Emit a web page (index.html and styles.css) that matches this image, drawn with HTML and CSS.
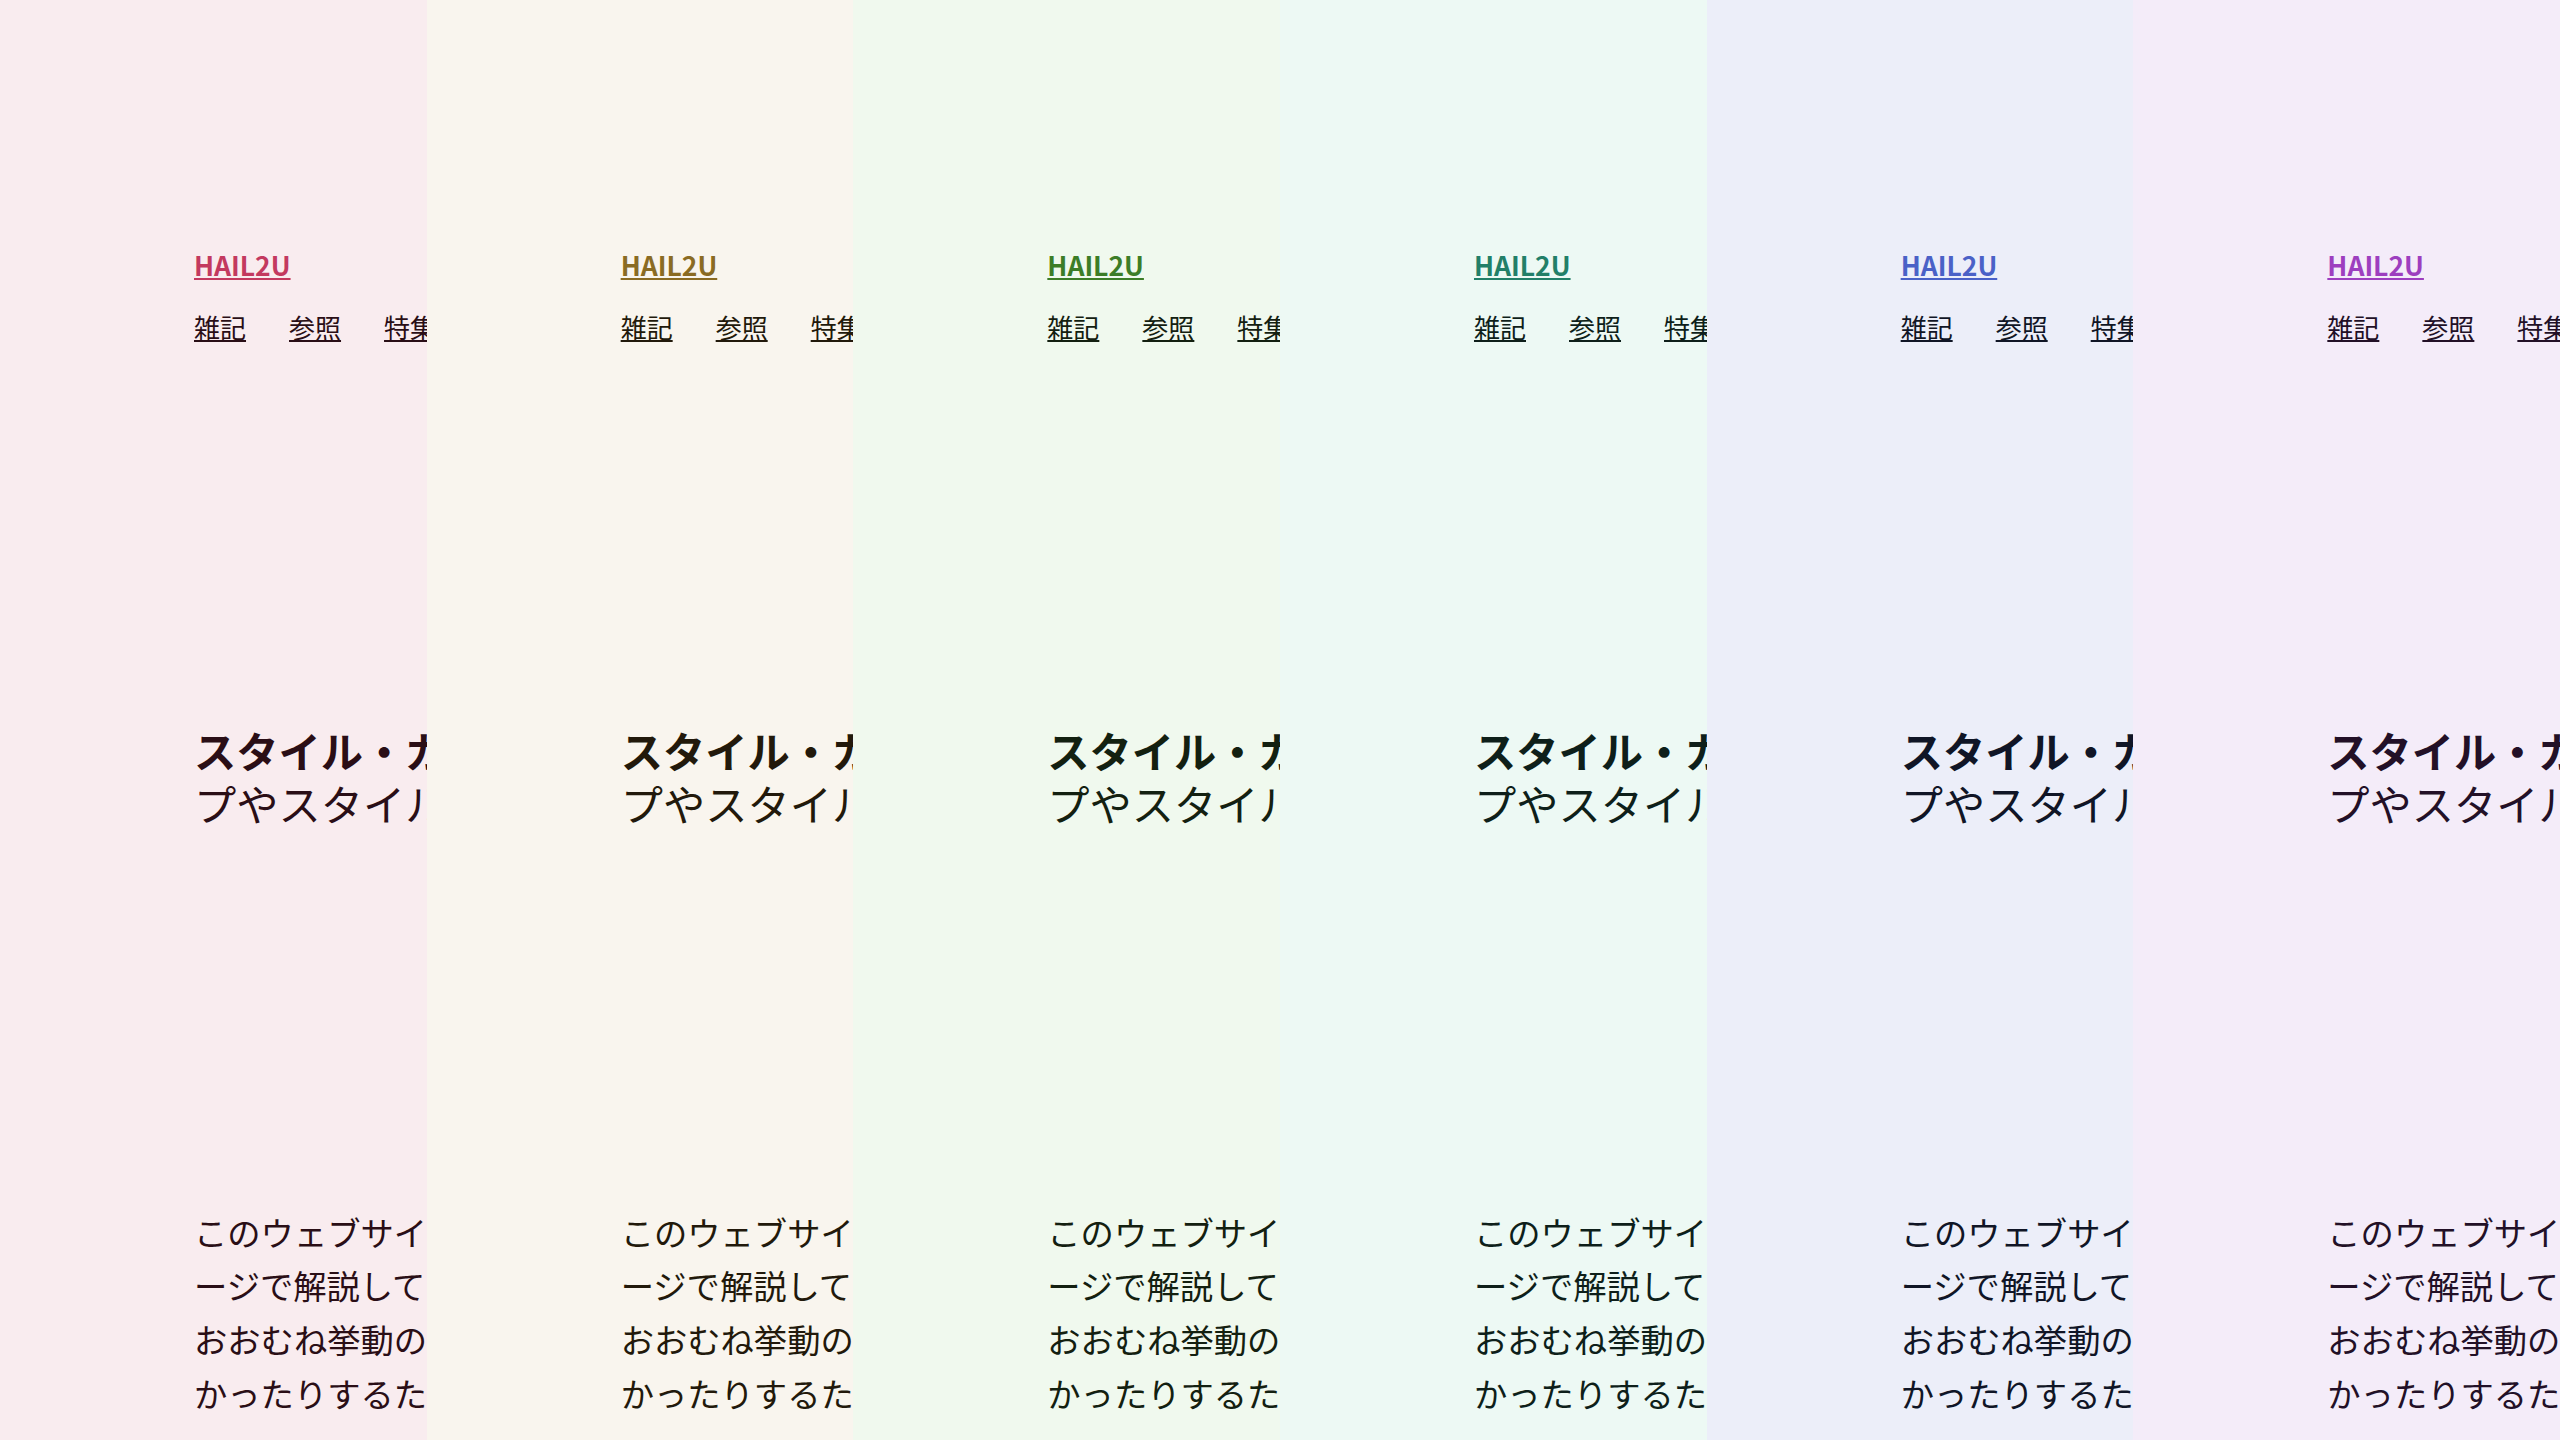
FILE: index.html
```html
<!DOCTYPE html>
<html lang="ja">
<head>
<meta charset="utf-8">
<title>HAIL2U テーマ比較</title>
<link rel="stylesheet" href="styles.css">
</head>
<body>
<main class="themes">
  <section class="pane theme-rose">
    <div class="page">
      <header class="site-header">
        <a class="logo" href="#">HAIL2U</a>
        <nav class="nav"><a href="#">雑記</a><a href="#">参照</a><a href="#">特集</a><a href="#">概要</a></nav>
      </header>
      <h1 class="title"><strong>スタイル・ガイド</strong><span class="sub">プやスタイルの見本帳</span></h1>
      <p class="lead">このウェブサイトのデザインと部品の使い方を、このペ<br>ージで解説しています。表示の確認はまだ途中ですが、<br>おおむね挙動の確認はできています。使いにくいと気にか<br>かったりするたびに少しずつ改善していきます。</p>
    </div>
  </section>
  <section class="pane theme-sand">
    <div class="page">
      <header class="site-header">
        <a class="logo" href="#">HAIL2U</a>
        <nav class="nav"><a href="#">雑記</a><a href="#">参照</a><a href="#">特集</a><a href="#">概要</a></nav>
      </header>
      <h1 class="title"><strong>スタイル・ガイド</strong><span class="sub">プやスタイルの見本帳</span></h1>
      <p class="lead">このウェブサイトのデザインと部品の使い方を、このペ<br>ージで解説しています。表示の確認はまだ途中ですが、<br>おおむね挙動の確認はできています。使いにくいと気にか<br>かったりするたびに少しずつ改善していきます。</p>
    </div>
  </section>
  <section class="pane theme-leaf">
    <div class="page">
      <header class="site-header">
        <a class="logo" href="#">HAIL2U</a>
        <nav class="nav"><a href="#">雑記</a><a href="#">参照</a><a href="#">特集</a><a href="#">概要</a></nav>
      </header>
      <h1 class="title"><strong>スタイル・ガイド</strong><span class="sub">プやスタイルの見本帳</span></h1>
      <p class="lead">このウェブサイトのデザインと部品の使い方を、このペ<br>ージで解説しています。表示の確認はまだ途中ですが、<br>おおむね挙動の確認はできています。使いにくいと気にか<br>かったりするたびに少しずつ改善していきます。</p>
    </div>
  </section>
  <section class="pane theme-teal">
    <div class="page">
      <header class="site-header">
        <a class="logo" href="#">HAIL2U</a>
        <nav class="nav"><a href="#">雑記</a><a href="#">参照</a><a href="#">特集</a><a href="#">概要</a></nav>
      </header>
      <h1 class="title"><strong>スタイル・ガイド</strong><span class="sub">プやスタイルの見本帳</span></h1>
      <p class="lead">このウェブサイトのデザインと部品の使い方を、このペ<br>ージで解説しています。表示の確認はまだ途中ですが、<br>おおむね挙動の確認はできています。使いにくいと気にか<br>かったりするたびに少しずつ改善していきます。</p>
    </div>
  </section>
  <section class="pane theme-blue">
    <div class="page">
      <header class="site-header">
        <a class="logo" href="#">HAIL2U</a>
        <nav class="nav"><a href="#">雑記</a><a href="#">参照</a><a href="#">特集</a><a href="#">概要</a></nav>
      </header>
      <h1 class="title"><strong>スタイル・ガイド</strong><span class="sub">プやスタイルの見本帳</span></h1>
      <p class="lead">このウェブサイトのデザインと部品の使い方を、このペ<br>ージで解説しています。表示の確認はまだ途中ですが、<br>おおむね挙動の確認はできています。使いにくいと気にか<br>かったりするたびに少しずつ改善していきます。</p>
    </div>
  </section>
  <section class="pane theme-violet">
    <div class="page">
      <header class="site-header">
        <a class="logo" href="#">HAIL2U</a>
        <nav class="nav"><a href="#">雑記</a><a href="#">参照</a><a href="#">特集</a><a href="#">概要</a></nav>
      </header>
      <h1 class="title"><strong>スタイル・ガイド</strong><span class="sub">プやスタイルの見本帳</span></h1>
      <p class="lead">このウェブサイトのデザインと部品の使い方を、このペ<br>ージで解説しています。表示の確認はまだ途中ですが、<br>おおむね挙動の確認はできています。使いにくいと気にか<br>かったりするたびに少しずつ改善していきます。</p>
    </div>
  </section>
</main>
</body>
</html>
```

FILE: styles.css
```css
html, body {
  margin: 0;
  padding: 0;
  height: 100%;
}

body {
  font-family: "Noto Sans CJK JP", "Noto Sans", sans-serif;
  overflow: hidden;
}

.themes {
  display: grid;
  grid-template-columns: repeat(6, 1fr);
  height: 1440px;
}

.pane {
  overflow: hidden;
  background: var(--bg);
  color: var(--ink);
}

.page {
  width: 1400px;
  padding: 244px 0 0 194px;
  white-space: nowrap;
}

.site-header {
  display: flex;
  flex-direction: column;
  align-items: flex-start;
}

.logo {
  font-size: 26.5px;
  line-height: 41.3px;
  font-weight: 700;
  color: var(--accent);
  text-decoration: underline;
}

.nav {
  display: flex;
  gap: 43px;
  margin-top: 22px;
  font-size: 26px;
  line-height: 40px;
}

.nav a {
  color: var(--ink);
  text-decoration: underline;
}

.title {
  margin: 377px 0 0;
  font-size: 42.25px;
  line-height: 52.8px;
  font-weight: 400;
}

.title strong {
  display: block;
  font-weight: 700;
}

.title .sub {
  display: block;
}

.lead {
  margin: 375px 0 0;
  font-size: 33.3px;
  line-height: 53.6px;
}

.theme-rose   { --bg: #f9ecef; --accent: #c3395f; --ink: #2a0e16; }
.theme-sand   { --bg: #f9f5ee; --accent: #8a6b23; --ink: #22190b; }
.theme-leaf   { --bg: #f0f9ee; --accent: #3c7d27; --ink: #132010; }
.theme-teal   { --bg: #edf9f4; --accent: #227f68; --ink: #0e1f1a; }
.theme-blue   { --bg: #eceef9; --accent: #4a61c7; --ink: #101526; }
.theme-violet { --bg: #f4ecf9; --accent: #9d3ebf; --ink: #221027; }
```
